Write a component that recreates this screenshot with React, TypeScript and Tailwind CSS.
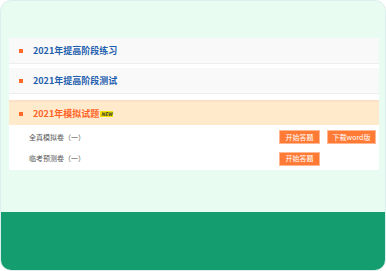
const rows = ["2021年提高阶段练习", "2021年提高阶段测试"];

const Btn = ({ label, w }: { label: string; w: string }) => (
  <span
    className={`flex h-[14px] ${w} items-center justify-center border border-[#ffb892] bg-[#ff7a35] text-[7px] leading-none text-white`}
  >
    {label}
  </span>
);

export default function App() {
  return (
    <div
      className="flex h-[271px] w-[386px] flex-col overflow-hidden rounded-[11px] border border-[#dcefee] bg-[#e9fcf1]"
      style={{ fontFamily: '"Noto Sans CJK SC", "Noto Sans", sans-serif' }}
    >
      <div className="flex h-[211px] flex-col pl-[8px] pr-[6px] pt-[37px]">
        <div className="flex flex-col bg-white">
          {rows.map((r) => (
            <div
              key={r}
              className="mb-[4px] flex h-[26px] items-center border-b border-[#eeeeee] bg-[#f9f9f9] pl-[10px]"
            >
              <span className="mr-[10px] h-[4px] w-[4px] bg-[#ff6a2a]" />
              <span className="text-[9px] font-bold text-[#1f5fae]">{r}</span>
            </div>
          ))}
          <div className="mt-[2px] flex h-[25px] items-center border-t-2 border-[#fde0c6] bg-[#ffebcb] pl-[10px]">
            <span className="mr-[10px] h-[4px] w-[4px] bg-[#ff6a2a]" />
            <span className="text-[9px] font-bold text-[#ff6227]">2021年模拟试题</span>
            <span className="ml-[1px] flex h-[6px] w-[13px] items-center justify-center bg-[#f5e400] text-[5px] font-bold italic leading-none text-[#333]">
              NEW
            </span>
          </div>
          <div className="flex h-[23px] items-center justify-between pl-[20px] pr-[3px] pt-[1px]">
            <span className="text-[7px] text-[#555555]">全真模拟卷（一）</span>
            <div className="flex w-[97px] gap-[7px]">
              <Btn label="开始答题" w="w-[41px]" />
              <Btn label="下载word版" w="w-[49px]" />
            </div>
          </div>
          <div className="flex h-[22px] items-center justify-between pl-[20px] pr-[3px] pb-[1px]">
            <span className="text-[7px] text-[#555555]">临考预测卷（一）</span>
            <div className="flex w-[97px]">
              <Btn label="开始答题" w="w-[41px]" />
            </div>
          </div>
        </div>
      </div>
      <div className="flex-1 bg-[#149d6f]" />
    </div>
  );
}
